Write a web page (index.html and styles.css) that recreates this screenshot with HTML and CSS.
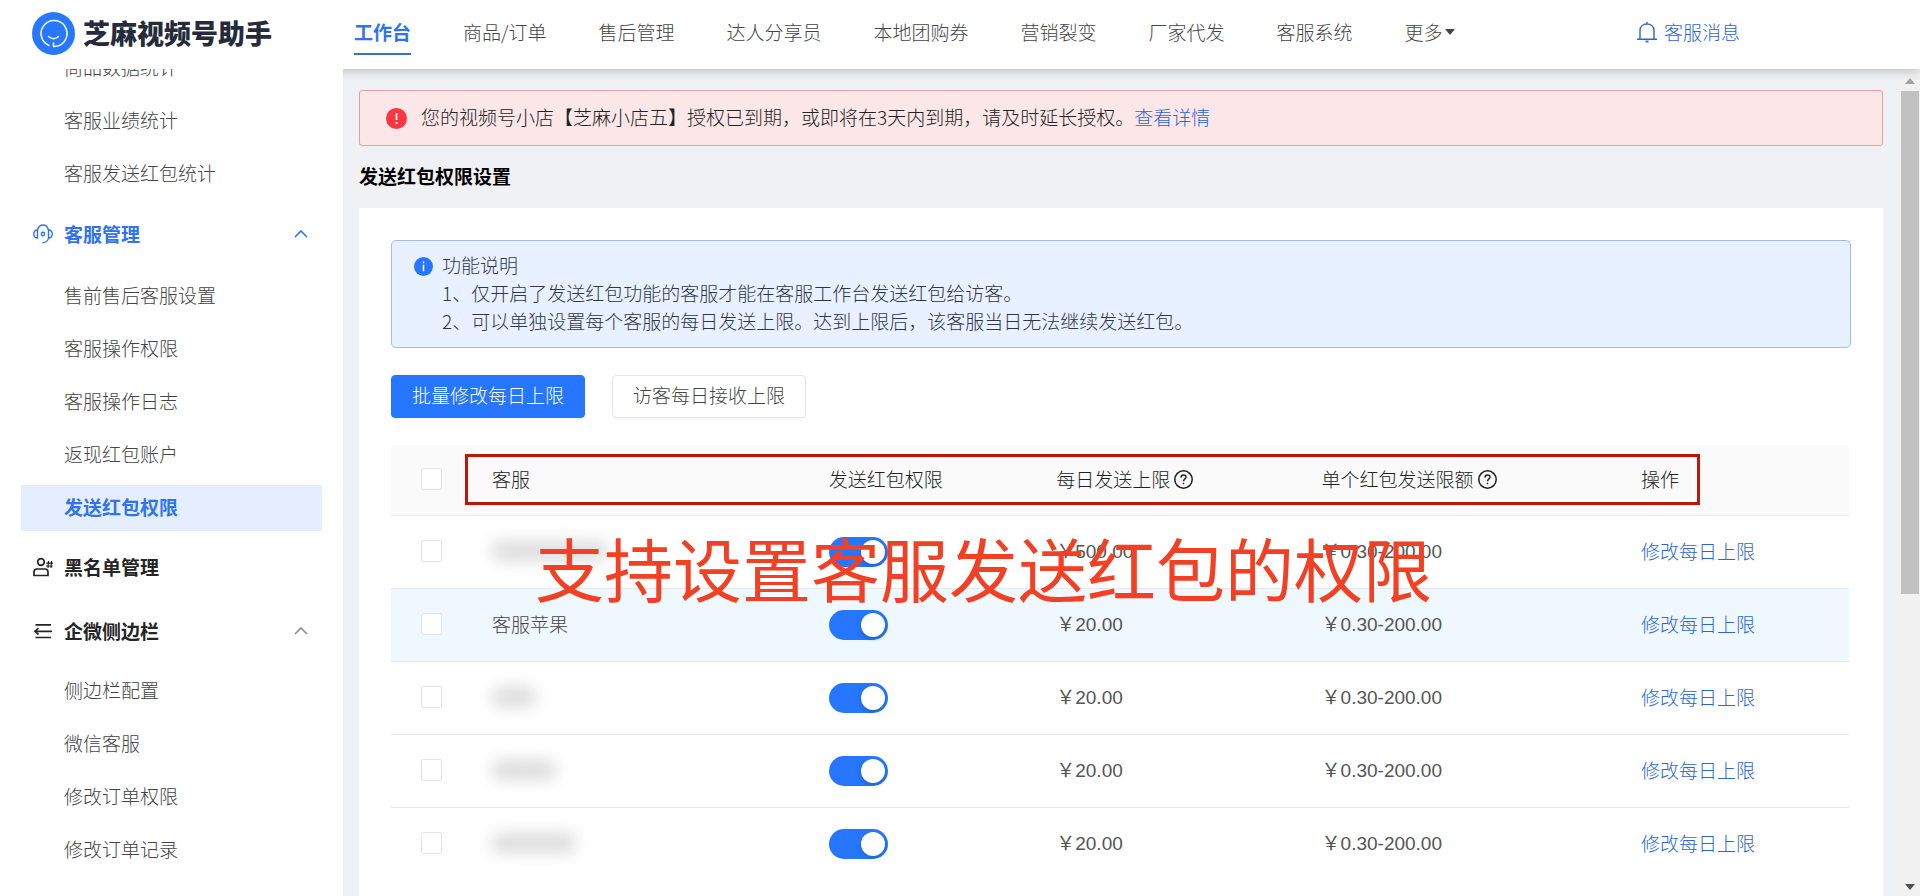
FILE: index.html
```
<!DOCTYPE html>
<html lang="zh-CN">
<head>
<meta charset="utf-8">
<meta name="viewport" content="width=device-width, initial-scale=1">
<title>芝麻视频号助手</title>
<link rel="stylesheet" href="styles.css">
</head>
<body class="app">
<header class="topbar">
  <div class="brand">
    <svg class="brand-logo" viewBox="0 0 43 43" aria-hidden="true">
      <circle cx="21.500" cy="21.500" r="21.500" fill="#2878ff"/>
      <path d="M17 33.500A13 13 0 1 1 21.500 34.500V31" fill="none" stroke="#fff" stroke-width="1.500" stroke-linecap="round" stroke-linejoin="round"/>
      <path d="M16.500 24.500q5 4.500 10 0" fill="none" stroke="#fff" stroke-width="1.500" stroke-linecap="round"/>
    </svg>
    <span class="brand-name">芝麻视频号助手</span>
  </div>
  <nav class="nav">
    <a class="nav-item nav-item--active" href="#">工作台</a>
    <a class="nav-item" href="#">商品/订单</a>
    <a class="nav-item" href="#">售后管理</a>
    <a class="nav-item" href="#">达人分享员</a>
    <a class="nav-item" href="#">本地团购券</a>
    <a class="nav-item" href="#">营销裂变</a>
    <a class="nav-item" href="#">厂家代发</a>
    <a class="nav-item" href="#">客服系统</a>
    <button class="nav-item nav-more" type="button">更多<svg class="caret" viewBox="0 0 10 6" aria-hidden="true"><path d="M0 0h10L5 6z" fill="currentColor"/></svg></button>
    <a class="messages" href="#">
      <svg class="bell" viewBox="0 0 22 22" fill="none" stroke="currentColor" stroke-width="1.400" aria-hidden="true"><path d="M11 1v2M4 18V9.500C4 5.500 7 3 11 3s7 2.500 7 6.500V18M1 18.300h20"/><path d="M9.500 20.500h3" stroke-width="1.800"/></svg>
      客服消息
    </a>
  </nav>
</header>

<aside class="sidebar">
  <div class="menu">
    <ul class="submenu">
      <li><a class="sub" href="#">商品数据统计</a></li>
      <li><a class="sub" href="#">客服业绩统计</a></li>
      <li><a class="sub" href="#">客服发送红包统计</a></li>
    </ul>
    <button class="group group--active" type="button">
      <svg class="group-icon" viewBox="0 0 20 20" fill="none" stroke="currentColor" stroke-width="1.400" aria-hidden="true"><path d="M4.500 6v8C2 14 .8 12 .8 10S2 6 4.500 6zM15.500 6v8c2.500 0 3.700-2 3.700-4S18 6 15.500 6z"/><path d="M4.500 6C5.500 2.500 7.500 1 10 1s4.500 1.500 5.500 5M15.500 14c-.5 3-2.500 4.500-6 4.800"/><circle cx="10" cy="10" r="1.700"/></svg>
      <span class="group-label">客服管理</span>
      <svg class="chevron" viewBox="0 0 14 8" fill="none" stroke="currentColor" stroke-width="1.600" aria-hidden="true"><path d="M1 7l6-6 6 6"/></svg>
    </button>
    <ul class="submenu">
      <li><a class="sub" href="#">售前售后客服设置</a></li>
      <li><a class="sub" href="#">客服操作权限</a></li>
      <li><a class="sub" href="#">客服操作日志</a></li>
      <li><a class="sub" href="#">返现红包账户</a></li>
      <li><a class="sub sub--active" href="#" aria-current="page">发送红包权限</a></li>
    </ul>
    <button class="group" type="button">
      <svg class="group-icon" viewBox="0 0 20 20" fill="none" stroke="currentColor" stroke-width="1.700" aria-hidden="true"><circle cx="8" cy="5" r="3.300"/><path d="M1 18.500V15q0-3 3-3h8q3 0 3 3v3.500z"/><path d="M15.500 4l-.5 7M18.500 4l-.5 7M13.300 6.200H20M13 9h6.700" stroke-width="1.200"/></svg>
      <span class="group-label">黑名单管理</span>
    </button>
    <button class="group group--spaced" type="button">
      <svg class="group-icon" viewBox="0 0 20 20" fill="none" stroke="currentColor" stroke-width="1.700" aria-hidden="true"><path d="M2.500 3.800H18M7 10.300h12M2.500 16.500H18M2 10.300h5"/><path d="M5.500 7L2 10.300l3.500 3.200"/></svg>
      <span class="group-label">企微侧边栏</span>
      <svg class="chevron" viewBox="0 0 14 8" fill="none" stroke="currentColor" stroke-width="1.600" aria-hidden="true"><path d="M1 7l6-6 6 6"/></svg>
    </button>
    <ul class="submenu">
      <li><a class="sub" href="#">侧边栏配置</a></li>
      <li><a class="sub" href="#">微信客服</a></li>
      <li><a class="sub" href="#">修改订单权限</a></li>
      <li><a class="sub" href="#">修改订单记录</a></li>
    </ul>
  </div>
</aside>

<main class="main">
  <div class="content">
    <div class="alert" role="alert">
      <svg class="alert-icon" viewBox="0 0 21 21" aria-hidden="true"><circle cx="10.500" cy="10.500" r="10.500" fill="#fb3640"/><path d="M10.500 5v7M10.500 14v2" stroke="#fff" stroke-width="1.700"/></svg>
      <p class="alert-text">您的视频号小店【芝麻小店五】授权已到期，或即将在3天内到期，请及时延长授权。<a class="link" href="#">查看详情</a></p>
    </div>
    <h1 class="page-title">发送红包权限设置</h1>
    <section class="panel">
      <div class="info">
        <svg class="info-icon" viewBox="0 0 19 19" aria-hidden="true"><circle cx="9.500" cy="9.500" r="9.500" fill="#2676ff"/><path d="M9.500 4.500v1.800M9.500 7.800v6.500" stroke="#fff" stroke-width="1.500"/></svg>
        <div class="info-text">
          <p>功能说明</p>
          <p>1、仅开启了发送红包功能的客服才能在客服工作台发送红包给访客。</p>
          <p>2、可以单独设置每个客服的每日发送上限。达到上限后，该客服当日无法继续发送红包。</p>
        </div>
      </div>
      <div class="actions">
        <button class="btn btn--primary" type="button">批量修改每日上限</button>
        <button class="btn" type="button">访客每日接收上限</button>
      </div>
      <div class="table-wrap">
        <table class="table">
          <colgroup><col class="c-check"><col class="c-name"><col class="c-perm"><col class="c-daily"><col class="c-single"><col class="c-op"></colgroup>
          <thead>
            <tr>
              <th class="cell-check"><input class="check" type="checkbox" aria-label="全选"></th>
              <th>客服</th>
              <th>发送红包权限</th>
              <th><span class="with-help">每日发送上限<svg class="help" viewBox="0 0 19 19" fill="none" stroke="currentColor" stroke-width="1.500" aria-hidden="true"><circle cx="9.500" cy="9.500" r="8.700"/><path d="M7 7.500C7 5.800 8 5 9.500 5S12 5.900 12 7.200c0 1.600-2.500 1.900-2.500 4M9.500 12.700v1.600"/></svg></span></th>
              <th><span class="with-help">单个红包发送限额<svg class="help" viewBox="0 0 19 19" fill="none" stroke="currentColor" stroke-width="1.500" aria-hidden="true"><circle cx="9.500" cy="9.500" r="8.700"/><path d="M7 7.500C7 5.800 8 5 9.500 5S12 5.900 12 7.200c0 1.600-2.500 1.900-2.500 4M9.500 12.700v1.600"/></svg></span></th>
              <th>操作</th>
            </tr>
          </thead>
          <tbody>
            <tr>
              <td class="cell-check"><input class="check" type="checkbox" aria-label="选择"></td>
              <td><span class="masked masked--xl"></span></td>
              <td><input class="switch" type="checkbox" role="switch" aria-label="发送红包权限" checked></td>
              <td class="amount">￥500.00</td>
              <td class="amount">￥0.30-200.00</td>
              <td><a class="link" href="#">修改每日上限</a></td>
            </tr>
            <tr class="row--hover">
              <td class="cell-check"><input class="check" type="checkbox" aria-label="选择客服苹果"></td>
              <td>客服苹果</td>
              <td><input class="switch" type="checkbox" role="switch" aria-label="发送红包权限" checked></td>
              <td class="amount">￥20.00</td>
              <td class="amount">￥0.30-200.00</td>
              <td><a class="link" href="#">修改每日上限</a></td>
            </tr>
            <tr>
              <td class="cell-check"><input class="check" type="checkbox" aria-label="选择"></td>
              <td><span class="masked masked--s"></span></td>
              <td><input class="switch" type="checkbox" role="switch" aria-label="发送红包权限" checked></td>
              <td class="amount">￥20.00</td>
              <td class="amount">￥0.30-200.00</td>
              <td><a class="link" href="#">修改每日上限</a></td>
            </tr>
            <tr>
              <td class="cell-check"><input class="check" type="checkbox" aria-label="选择"></td>
              <td><span class="masked masked--m"></span></td>
              <td><input class="switch" type="checkbox" role="switch" aria-label="发送红包权限" checked></td>
              <td class="amount">￥20.00</td>
              <td class="amount">￥0.30-200.00</td>
              <td><a class="link" href="#">修改每日上限</a></td>
            </tr>
            <tr>
              <td class="cell-check"><input class="check" type="checkbox" aria-label="选择"></td>
              <td><span class="masked masked--l"></span></td>
              <td><input class="switch" type="checkbox" role="switch" aria-label="发送红包权限" checked></td>
              <td class="amount">￥20.00</td>
              <td class="amount">￥0.30-200.00</td>
              <td><a class="link" href="#">修改每日上限</a></td>
            </tr>
          </tbody>
        </table>
        <div class="frame"></div>
        <div class="caption">支持设置客服发送红包的权限</div>
      </div>
    </section>
  </div>
  <div class="scrollbar" aria-hidden="true">
    <svg class="arrow arrow--up" viewBox="0 0 10 6"><path d="M0 6h10L5 0z" fill="currentColor"/></svg>
    <div class="thumb"></div>
    <svg class="arrow" viewBox="0 0 10 6"><path d="M0 0h10L5 6z" fill="currentColor"/></svg>
  </div>
</main>
</body>
</html>
```
FILE: styles.css
```
* {
  box-sizing: border-box;
}

body,
h1,
p,
ul {
  margin: 0;
  padding: 0;
}

ul {
  list-style: none;
}

a {
  color: inherit;
  text-decoration: none;
}

button {
  font: inherit;
  color: inherit;
  background: none;
  border: 0;
  padding: 0;
  cursor: pointer;
}

.app {
  display: grid;
  grid-template: 69px minmax(0, 1fr) / 343px minmax(0, 1fr);
  height: 100vh;
  overflow: hidden;
  background: #fff;
  color: #444;
  font-family: "Noto Sans CJK SC", sans-serif;
  font-size: 19px;
  font-weight: 300;
  line-height: 28px;
}

.link {
  color: #2b66d2;
}

/* Top bar */
.topbar {
  grid-column: 1 / -1;
  display: grid;
  grid-template-columns: subgrid;
  position: relative;
  z-index: 1;
  background: #fff;
  box-shadow: 0 2px 10px rgba(0, 0, 0, 0.22);
}

.brand {
  display: flex;
  align-items: center;
  gap: 8px;
  padding: 0 0 3px 32px;
}

.brand-logo {
  width: 43px;
  height: 43px;
}

.brand-name {
  font-size: 27px;
  font-weight: 900;
  color: #252b3a;
}

.nav {
  display: flex;
  align-items: flex-start;
  gap: 52px;
  padding: 18px 180px 0 11px;
  white-space: nowrap;
}

.nav-item--active {
  color: #2f74ee;
  font-weight: 700;
  padding-bottom: 7px;
  border-bottom: 2px solid #3672c8;
}

.nav-more {
  display: flex;
  align-items: center;
  gap: 2px;
}

.caret {
  width: 10px;
  height: 6px;
}

.messages {
  display: flex;
  align-items: center;
  gap: 6px;
  margin-left: auto;
  color: #2b66d2;
}

.bell {
  width: 22px;
  height: 22px;
}

/* Sidebar */
.sidebar {
  position: relative;
  z-index: 2;
  overflow: hidden;
  background: #fff;
}

.menu {
  margin-top: -24px;
  padding: 0 21px;
}

.submenu {
  display: grid;
  gap: 7px;
}

.sub {
  display: block;
  padding: 8px 0 10px 43px;
}

.sub--active {
  background: #e4eeff;
  color: #2f74ee;
  font-weight: 700;
}

.group {
  display: flex;
  align-items: center;
  gap: 11px;
  width: 100%;
  margin: 13px 0 14px;
  padding: 9px 14px 9px 12px;
  color: #252525;
  font-weight: 700;
}

.group--active {
  margin: 14px 0 16px;
  color: #2f74ee;
}

.group--spaced {
  margin-top: 18px;
}

.group-icon {
  width: 20px;
  height: 20px;
}

.chevron {
  width: 14px;
  height: 8px;
  margin-left: auto;
  color: #8c8c8c;
}

.group--active .chevron {
  color: inherit;
}

/* Main area */
.main {
  display: flex;
  min-height: 0;
  background: #f0f1f5;
}

.content {
  flex: 1;
  display: flex;
  flex-direction: column;
  min-width: 0;
  padding: 21px 16px 0;
}

.alert {
  display: flex;
  align-items: center;
  gap: 14px;
  padding: 12px 26px;
  color: #222;
  background: #fbe6e8;
  border: 1px solid #eb9da1;
  border-radius: 3px;
}

.alert-icon {
  flex: none;
  width: 21px;
  height: 21px;
}

.alert-text {
  padding-bottom: 2px;
}

.page-title {
  margin: 16px 0 18px;
  color: #000;
  font-size: 19px;
  font-weight: 700;
  line-height: 28px;
}

.panel {
  flex: 1;
  padding: 32px 32px 0;
  background: #fff;
}

.info {
  display: flex;
  align-items: flex-start;
  gap: 9px;
  padding: 10px 22px 12px;
  color: #2f364a;
  background: #e8f1ff;
  border: 1px solid #9cbdee;
  border-radius: 5px;
}

.info-icon {
  flex: none;
  width: 19px;
  height: 19px;
  margin-top: 6px;
}

.actions {
  display: flex;
  gap: 27px;
  margin: 27px 0;
}

.btn {
  height: 43px;
  padding: 0 20px 3px;
  background: #fff;
  border: 1px solid #e6e6e6;
  border-radius: 4px;
  box-shadow: 0 2px 2px rgba(0, 0, 0, 0.03);
}

.btn--primary {
  color: #fff;
  background: #2676ff;
  border-color: #2676ff;
}

/* Table */
.table-wrap {
  position: relative;
  margin-right: 2px;
}

.table {
  width: 100%;
  table-layout: fixed;
  border-collapse: separate;
  border-spacing: 0;
}

.c-check {
  width: 81px;
}

.c-name {
  width: 23.1%;
}

.c-perm {
  width: 15.6%;
}

.c-daily {
  width: 18.2%;
}

.c-single {
  width: 21.9%;
}

.table th,
.table td {
  height: 73px;
  padding: 0 0 2px 20px;
  text-align: left;
  vertical-align: middle;
  border-bottom: 1px solid #e6e8ea;
}

.table th {
  height: 71px;
  color: #222;
  font-weight: 300;
  background: #fafafa;
}

.table th:first-child {
  border-top-left-radius: 5px;
}

.table th:last-child {
  border-top-right-radius: 5px;
}

.table tbody tr:last-child td {
  border-bottom-color: transparent;
}

.table .cell-check {
  padding-left: 30px;
}

.row--hover {
  background: #eff7ff;
}

.table .amount {
  padding-bottom: 0;
  color: #555;
  font-family: "Liberation Sans", "Noto Sans CJK SC", sans-serif;
  font-weight: 400;
}

.check {
  appearance: none;
  display: block;
  width: 21px;
  height: 22px;
  margin: 0;
  background: #fff;
  border: 1px solid #e3e3e3;
  border-radius: 2px;
}

.switch {
  appearance: none;
  display: block;
  width: 59px;
  height: 30px;
  margin: 2px 0 0;
  padding: 3px;
  background: #2676ff;
  border-radius: 15px;
}

.switch::before {
  content: "";
  display: block;
  width: 24px;
  height: 24px;
  margin-left: auto;
  background: #fff;
  border-radius: 50%;
  box-shadow: 0 2px 4px rgba(0, 35, 11, 0.25);
}

.with-help {
  display: flex;
  align-items: center;
  gap: 4px;
}

.help {
  width: 19px;
  height: 19px;
}

.masked {
  display: block;
  height: 20px;
  background: #dcdcdc;
  border-radius: 8px;
  filter: blur(8px);
}

.masked--xl {
  width: 116px;
}

.masked--s {
  width: 44px;
}

.masked--m {
  width: 64px;
}

.masked--l {
  width: 84px;
}

/* Annotations laid over the table */
.frame {
  position: absolute;
  top: 9px;
  left: 74px;
  right: 149px;
  height: 51px;
  border: 3px solid #c01608;
}

.caption {
  position: absolute;
  top: 87px;
  left: 144px;
  color: #f24024;
  font-size: 69px;
  font-weight: 400;
  line-height: 70px;
  white-space: nowrap;
}

/* Scrollbar */
.scrollbar {
  display: flex;
  flex-direction: column;
  align-items: center;
  width: 21px;
  padding: 9px 1px 6px 2px;
  background: #f1f1f1;
}

.arrow {
  flex: none;
  width: 10px;
  height: 6px;
  color: #505050;
}

.arrow--up {
  color: #a3a3a3;
}

.thumb {
  width: 100%;
  height: 62%;
  margin: 7px 0 auto;
  background: #c1c1c1;
}
```
